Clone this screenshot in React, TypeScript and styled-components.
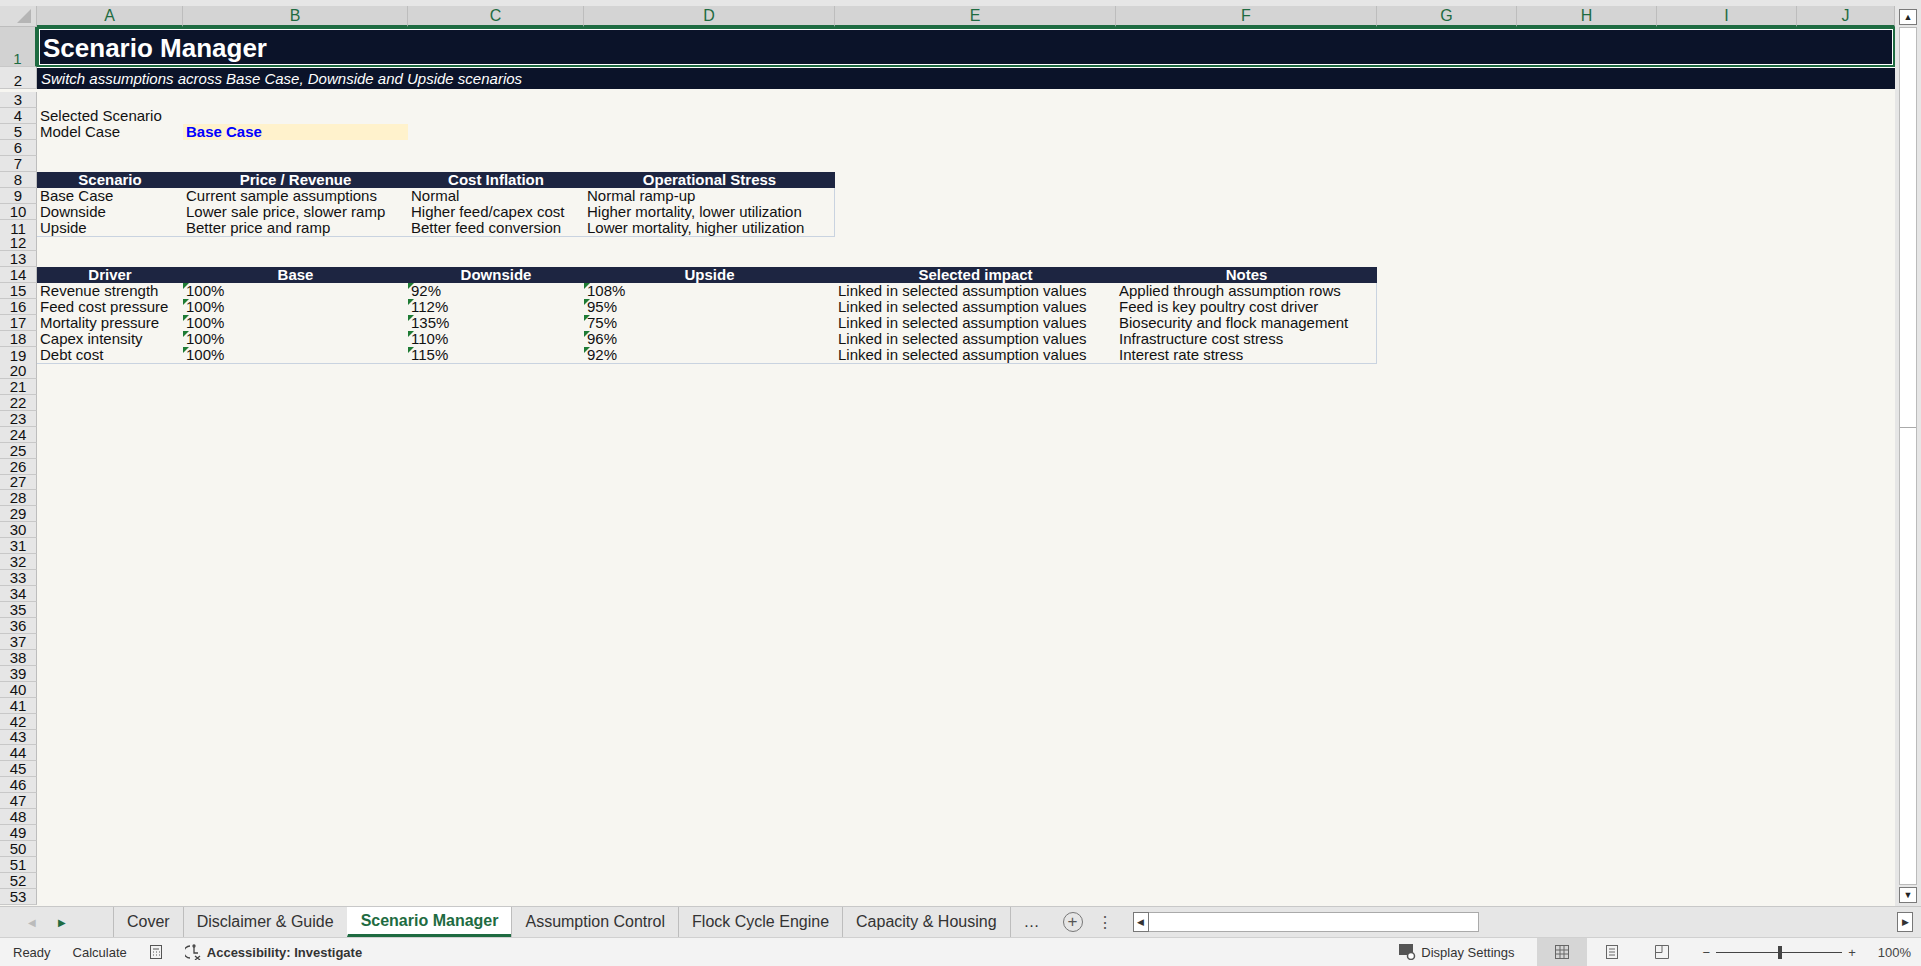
import React from "react";
import styled, { createGlobalStyle } from "styled-components";

const Global = createGlobalStyle`
  html, body { margin: 0; padding: 0; height: 100%; overflow: hidden; background: #f7f6f1; }
  #root { height: 966px; }
  * { box-sizing: border-box; }
`;

const COLS = "37px 146px 225px 176px 251px 281px 261px 140px 140px 140px 98px";
const LETTERS = ["A", "B", "C", "D", "E", "F", "G", "H", "I", "J"];

const Page = styled.div`
  width: 1921px; height: 966px; display: flex; flex-direction: column;
  font-family: "Liberation Sans", Arial, sans-serif; background: #e6e6e6;
`;
const Main = styled.div`
  flex: 1; display: flex; min-height: 0; padding-top: 6px;
`;
const Sheet = styled.div`
  flex: 1; display: flex; flex-direction: column; overflow: hidden; background: #f7f6f1;
`;
const VScroll = styled.div`
  width: 26px; background: #e6e6e6; display: flex; flex-direction: column; align-items: center;
  padding: 3px 2px; gap: 2px;
`;
const ScrollBtn = styled.div`
  width: 18px; height: 16px; border: 1px solid #7a7a7a; background: #fff;
  display: flex; align-items: center; justify-content: center; font-size: 9px; color: #222;
`;
const ScrollTrack = styled.div`
  flex: 1; width: 18px; background: #fff; border: 1px solid #bbb; display: flex; flex-direction: column;
`;
const Thumb = styled.div`
  height: 400px; border-bottom: 1px solid #aaa; background: #fff;
`;
const Row = styled.div<{ $h: number }>`
  display: grid; grid-template-columns: ${COLS}; height: ${(p) => p.$h}px; flex-shrink: 0;
`;
const ColHead = styled.div<{ $first?: boolean }>`
  background: #d4d4d4; border-right: 1px solid #bdbdbd; border-bottom: 2px solid #1e6b41;
  color: #1e6b41; font-size: 16px; display: flex; align-items: center; justify-content: center;
  height: 21px;
  ${(p) => p.$first && "background: #dcdcdc; border-bottom: 1px solid #bdbdbd;"}
`;
const Corner = styled.div`
  width: 0; height: 0; border-left: 14px solid transparent; border-bottom: 14px solid #b5b5b5;
  margin-left: 12px;
`;
const RowHead = styled.div<{ $sel?: boolean }>`
  background: ${(p) => (p.$sel ? "#d2d2d2" : "#e6e6e6")};
  color: ${(p) => (p.$sel ? "#1e6b41" : "#111")};
  border-right: ${(p) => (p.$sel ? "2px solid #1e6b41" : "1px solid #bdbdbd")};
  border-bottom: 1px solid #c8c8c8; font-size: 15px; line-height: 1;
  display: flex; align-items: flex-end; justify-content: center; overflow: hidden; padding-bottom: 0;
`;
const Cell = styled.div<{ $span?: string; $align?: string }>`
  grid-column: ${(p) => p.$span || "auto"}; position: relative; font-size: 15px; color: #111;
  padding: 0 3px; white-space: nowrap; overflow: visible; line-height: 16px;
  text-align: ${(p) => p.$align || "left"};
`;
const Title = styled.div`
  grid-column: 2 / -1; background: #0b1329; color: #fff; font-weight: bold; font-size: 26px;
  display: flex; align-items: center; padding: 4px 4px 0; border: 2px solid #1e6b41;
  box-shadow: inset 0 0 0 1px #fff;
`;
const Subtitle = styled.div`
  grid-column: 2 / -1; background: #0b1329; color: #fff; font-style: italic; font-size: 15px;
  display: flex; align-items: center; padding: 0 4px; border-top: 1px solid #fff;
`;
const Input = styled(Cell)`
  background: #fff2cc; color: #0000ff; font-weight: bold;
`;
const Hd = styled(Cell)`
  background: #1d2541; color: #fff; font-weight: bold; text-align: center;
`;
const Body = styled(Cell)<{ $last?: boolean; $end?: boolean }>`
  ${(p) => p.$end && "border-right: 1px solid #c9d3e0;"}
  ${(p) => p.$last && "border-bottom: 1px solid #c9d3e0;"}
`;
const Flag = styled.span`
  position: absolute; left: 0; top: 0; width: 0; height: 0;
  border-top: 6px solid #1e7b34; border-right: 6px solid transparent;
`;
const Empty = styled.div``;

const TabBar = styled.div`
  height: 31px; display: flex; align-items: stretch; background: #e6e6e6; border-top: 1px solid #c8c8c8;
  font-size: 16px; color: #333;
`;
const Nav = styled.div`
  width: 113px; display: flex; align-items: center; gap: 22px; padding-left: 28px; font-size: 10px;
`;
const Tab = styled.div<{ $active?: boolean }>`
  padding: 0 13px; display: flex; align-items: center; border-left: 1px solid #bdbdbd;
  ${(p) =>
    p.$active &&
    "background:#fff; color:#1e6b41; font-weight:bold; border-bottom:3px solid #1e6b41; border-left-color: transparent;"}
`;
const TabTools = styled.div`
  display: flex; align-items: center; gap: 14px; padding-left: 10px; color: #555;
`;
const AddBtn = styled.div`
  width: 20px; height: 20px; border: 1px solid #777; border-radius: 50%; display: flex;
  align-items: center; justify-content: center; font-size: 17px; color: #555;
`;
const HScroll = styled.div`
  flex: 1; display: flex; align-items: center; padding: 0 8px 0 0; gap: 0;
`;
const HBtn = styled.div`
  width: 16px; height: 20px; border: 1px solid #777; background: #fff; font-size: 9px;
  display: flex; align-items: center; justify-content: center;
`;
const HTrack = styled.div`
  flex: 1; height: 20px; display: flex;
`;
const HThumb = styled.div`
  width: 330px; height: 20px; background: #fff; border: 1px solid #aaa; border-left: none;
`;
const Status = styled.div`
  height: 29px; display: flex; align-items: center; background: #f3f3f3; border-top: 1px solid #d0d0d0;
  font-size: 13px; color: #333; padding-left: 13px;
`;
const SItem = styled.div<{ $bold?: boolean }>`
  margin-right: 22px; display: flex; align-items: center; gap: 4px;
  font-weight: ${(p) => (p.$bold ? "bold" : "normal")};
`;
const Right = styled.div`
  margin-left: auto; display: flex; align-items: center; height: 100%;
`;
const ViewBtn = styled.div<{ $on?: boolean }>`
  width: 50px; height: 100%; display: flex; align-items: center; justify-content: center;
  background: ${(p) => (p.$on ? "#d6d6d6" : "transparent")};
`;
const Zoom = styled.div`
  display: flex; align-items: center; gap: 6px; padding: 0 10px 0 16px; color: #444;
`;
const Slider = styled.div`
  width: 126px; height: 1px; background: #444; position: relative;
`;
const Knob = styled.div`
  position: absolute; left: 62px; top: -6px; width: 4px; height: 13px; background: #444;
`;

const scen = [
  ["Base Case", "Current sample assumptions", "Normal", "Normal ramp-up"],
  ["Downside", "Lower sale price, slower ramp", "Higher feed/capex cost", "Higher mortality, lower utilization"],
  ["Upside", "Better price and ramp", "Better feed conversion", "Lower mortality, higher utilization"],
];
const drivers = [
  ["Revenue strength", "100%", "92%", "108%", "Applied through assumption rows"],
  ["Feed cost pressure", "100%", "112%", "95%", "Feed is key poultry cost driver"],
  ["Mortality pressure", "100%", "135%", "75%", "Biosecurity and flock management"],
  ["Capex intensity", "100%", "110%", "96%", "Infrastructure cost stress"],
  ["Debt cost", "100%", "115%", "92%", "Interest rate stress"],
];

const Grid = ({ size = 14 }: { size?: number }) => (
  <svg width={size} height={size} viewBox="0 0 14 14" fill="none" stroke="#666" strokeWidth="1">
    <rect x="0.5" y="0.5" width="13" height="13" />
    <path d="M5 0.5v13M9 0.5v13M0.5 5h13M0.5 9h13" />
  </svg>
);

function renderRow(n: number) {
  const cells: React.ReactNode[] = [];
  if (n === 1) cells.push(<Title key="t">Scenario Manager</Title>);
  else if (n === 2) cells.push(<Subtitle key="s">Switch assumptions across Base Case, Downside and Upside scenarios</Subtitle>);
  else if (n === 4) cells.push(<Cell key="a">Selected Scenario</Cell>);
  else if (n === 5) cells.push(<Cell key="a">Model Case</Cell>, <Input key="b">Base Case</Input>);
  else if (n === 8)
    ["Scenario", "Price / Revenue", "Cost Inflation", "Operational Stress"].forEach((h) => cells.push(<Hd key={h}>{h}</Hd>));
  else if (n >= 9 && n <= 11)
    scen[n - 9].forEach((v, i) => cells.push(<Body key={i} $last={n === 11} $end={i === 3}>{v}</Body>));
  else if (n === 14)
    ["Driver", "Base", "Downside", "Upside", "Selected impact", "Notes"].forEach((h) => cells.push(<Hd key={h}>{h}</Hd>));
  else if (n >= 15 && n <= 19) {
    const d = drivers[n - 15];
    const last = n === 19;
    cells.push(<Body key="a" $last={last}>{d[0]}</Body>);
    [1, 2, 3].forEach((i) =>
      cells.push(
        <Body key={i} $last={last}>
          <Flag />
          {d[i]}
        </Body>
      )
    );
    cells.push(<Body key="e" $last={last}>Linked in selected assumption values</Body>);
    cells.push(<Body key="f" $last={last} $end>{d[4]}</Body>);
  }
  return cells;
}

export default function App() {
  const rows = Array.from({ length: 53 }, (_, i) => i + 1);
  return (
    <Page>
      <Global />
      <Main>
        <Sheet>
          <Row $h={21}>
            <ColHead $first><Corner /></ColHead>
            {LETTERS.map((l) => <ColHead key={l}>{l}</ColHead>)}
          </Row>
          {rows.map((n) => (
            <Row key={n} $h={n === 1 ? 40 : n === 2 ? 25 : 15.95}>
              <RowHead $sel={n === 1}>{n}</RowHead>
              {renderRow(n)}
              <Empty />
            </Row>
          ))}
        </Sheet>
        <VScroll>
          <ScrollBtn>▲</ScrollBtn>
          <ScrollTrack><Thumb /></ScrollTrack>
          <ScrollBtn>▼</ScrollBtn>
        </VScroll>
      </Main>
      <TabBar>
        <Nav><span style={{ color: "#bbb" }}>◀</span><span style={{ color: "#1e6b41" }}>▶</span></Nav>
        <Tab>Cover</Tab>
        <Tab>Disclaimer &amp; Guide</Tab>
        <Tab $active>Scenario Manager</Tab>
        <Tab>Assumption Control</Tab>
        <Tab>Flock Cycle Engine</Tab>
        <Tab>Capacity &amp; Housing</Tab>
        <Tab>…</Tab>
        <TabTools><AddBtn>+</AddBtn><span>⋮</span></TabTools>
        <HScroll style={{ paddingLeft: 20 }}>
          <HBtn>◀</HBtn>
          <HTrack><HThumb /></HTrack>
          <HBtn>▶</HBtn>
        </HScroll>
      </TabBar>
      <Status>
        <SItem>Ready</SItem>
        <SItem>Calculate</SItem>
        <SItem>
          <svg width="14" height="16" viewBox="0 0 14 16" fill="none" stroke="#555"><rect x="1.5" y="1.5" width="11" height="13" /><path d="M4 5h6M4 8h1M7 8h1M10 8h1M4 11h1M7 11h1M10 11h1" /></svg>
        </SItem>
        <SItem $bold>
          <svg width="18" height="16" viewBox="0 0 18 16" fill="none" stroke="#444" strokeWidth="1.3"><path d="M5 2a6 6 0 0 0 0 12M9 3v6h4M10 12l5 4M15 12l-5 4" /><circle cx="9" cy="2" r="1" /></svg>
          Accessibility: Investigate
        </SItem>
        <Right>
          <SItem>
            <svg width="18" height="16" viewBox="0 0 18 16"><rect x="0" y="0" width="14" height="11" fill="#555" /><circle cx="12" cy="12" r="3.5" fill="#fff" stroke="#555" strokeWidth="1.5" /></svg>
            Display Settings
          </SItem>
          <ViewBtn $on><Grid /></ViewBtn>
          <ViewBtn>
            <svg width="12" height="14" viewBox="0 0 12 14" fill="none" stroke="#666"><rect x="0.5" y="0.5" width="11" height="13" /><path d="M3 4h6M3 7h6M3 10h6" /></svg>
          </ViewBtn>
          <ViewBtn>
            <svg width="14" height="14" viewBox="0 0 14 14" fill="none" stroke="#666"><path d="M0.5 0.5h13v13h-13zM7 0.5v7M7 7.5h-6.5" /></svg>
          </ViewBtn>
          <Zoom>
            <span>−</span>
            <Slider><Knob /></Slider>
            <span>+</span>
            <span style={{ marginLeft: 16 }}>100%</span>
          </Zoom>
        </Right>
      </Status>
    </Page>
  );
}
